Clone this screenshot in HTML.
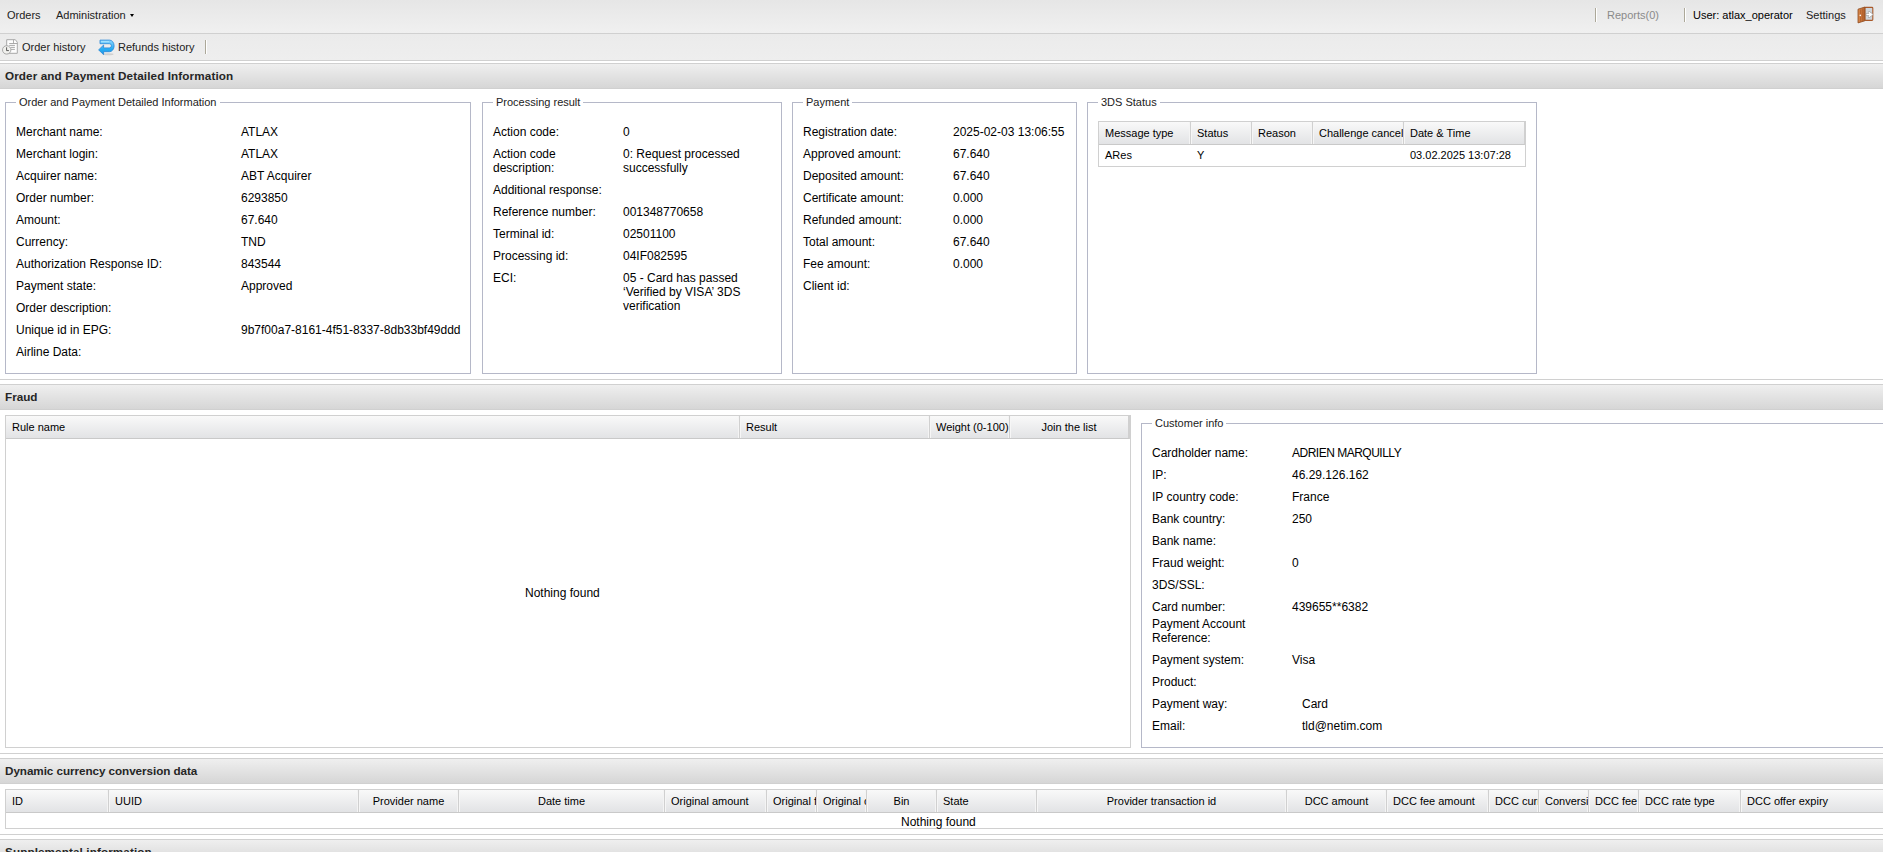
<!DOCTYPE html>
<html><head><meta charset="utf-8">
<style>
*{box-sizing:border-box;margin:0;padding:0}
html,body{width:1883px;height:852px;overflow:hidden;background:#fff}
body{position:relative;font-family:"Liberation Sans",sans-serif;font-size:12px;color:#000}
.a{position:absolute;white-space:nowrap}
.tb1{position:absolute;left:0;top:0;width:1883px;height:34px;background:linear-gradient(#e6e6e6,#f0f0f0);border-bottom:1px solid #d0d0d0}
.tb2{position:absolute;left:0;top:34px;width:1883px;height:27px;background:linear-gradient(#ebebeb,#eeeeee);border-bottom:1px solid #d0d0d0}
.tbt{font-size:11px;color:#222}
.hdr{position:absolute;left:0;width:1883px;height:26px;background:linear-gradient(#efefef,#d6d6d6);border-top:1px solid #d0d0d0;border-bottom:1px solid #d0d0d0;font-weight:bold;font-size:11.7px;color:#262626}
.hdr span{position:absolute;left:5px;top:5px}
.sep{position:absolute;left:0;width:1883px;height:1px;background:#d0d0d0}
.fs{position:absolute;border:1px solid #b5b8c8}
.lg{position:absolute;top:-8px;background:#fff;padding:0 3px;font-size:11px;line-height:14px;color:#222}
.grid{position:absolute;border:1px solid #d0d0d0;background:#fff}
.gh{position:absolute;left:0;top:0;height:23px;background:linear-gradient(#f9f9f9,#e2e3e5);border-bottom:1px solid #c9c9c9}
.gc{position:absolute;top:0;white-space:nowrap;height:22px;border-right:1px solid #d0d0d0;font-size:11px;line-height:22px;padding-left:6px;overflow:hidden;color:#000;box-shadow:1px 0 0 #f6f6f6,inset -1px 0 0 #f4f4f4}
.ctr{text-align:center;padding-left:0}
.r{position:absolute;white-space:nowrap;line-height:14px}
</style></head><body>

<!-- top toolbar -->
<div class="tb1"></div>
<div class="a tbt" style="left:7px;top:9px">Orders</div>
<div class="a tbt" style="left:56px;top:9px">Administration</div>
<div class="a" style="left:130px;top:14px;width:0;height:0;border-left:2.5px solid transparent;border-right:2.5px solid transparent;border-top:3px solid #000"></div>
<div class="a" style="left:1595px;top:8px;width:2px;height:14px;border-left:1px solid #aca899;border-right:1px solid #fff"></div>
<div class="a tbt" style="left:1607px;top:9px;color:#8a8a8a">Reports(0)</div>
<div class="a" style="left:1684px;top:8px;width:2px;height:14px;border-left:1px solid #aca899;border-right:1px solid #fff"></div>
<div class="a tbt" style="left:1693px;top:9px;color:#000">User: atlax_operator</div>
<div class="a tbt" style="left:1806px;top:9px">Settings</div>
<svg class="a" style="left:1856px;top:4px" width="20" height="22" viewBox="0 0 20 22">
 <defs><linearGradient id="dg" x1="0" x2="1" y1="0" y2="0"><stop offset="0" stop-color="#d9894c"/><stop offset="1" stop-color="#b8652c"/></linearGradient></defs>
 <rect x="8.8" y="3.4" width="8" height="13" rx="0.8" fill="#cfd6dc" stroke="#a9592a" stroke-width="1.1"/>
 <path d="M11 10.5 H14.5 M13.2 8.6 L15.8 10.5 L13.2 12.4" stroke="#999" stroke-width="2.6" fill="none" stroke-linecap="round" stroke-linejoin="round"/>
 <path d="M11 10.5 H14.5 M13.2 8.6 L15.8 10.5 L13.2 12.4" stroke="#fff" stroke-width="1.5" fill="none" stroke-linecap="round" stroke-linejoin="round"/>
 <path d="M2 5.2 L8.9 3 L8.9 16.8 L2 18.9 Z" fill="url(#dg)" stroke="#8e4a20" stroke-width="0.8" stroke-linejoin="round"/>
 <path d="M4.6 5.5 V17.6 M6.8 4.8 V17" stroke="#a8582a" stroke-width="0.7"/>
 <circle cx="4.3" cy="11.4" r="0.8" fill="#fff"/>
</svg>

<!-- second toolbar -->
<div class="tb2"></div>
<svg class="a" style="left:0px;top:36px" width="22" height="22" viewBox="0 0 22 22">
 <path d="M6.7 3.7 H15.3 L17.3 6.2 V17.3 H6.7 Z" fill="#fdfdfd" stroke="#a8a8a8" stroke-width="1"/>
 <path d="M13.5 3.7 V7.5" stroke="#a8a8a8" stroke-width="0.9"/>
 <path d="M9.2 7.5 H17.3 M9.2 9.4 H14.9 M10.5 11.4 H14.9 M11 13.4 H14.9" stroke="#a0a0a0" stroke-width="0.9"/>
 <circle cx="6.7" cy="13.9" r="4.2" fill="#f1f1ee" stroke="#a8a8a8" stroke-width="1"/>
 <path d="M6.6 11.3 V14.6 H8.9" stroke="#333" stroke-width="0.8" fill="none"/>
</svg>
<div class="a tbt" style="left:22px;top:41px">Order history</div>
<svg class="a" style="left:95px;top:36px" width="22" height="22" viewBox="0 0 22 22">
 <defs><linearGradient id="ag" x1="0" x2="0" y1="0" y2="1"><stop offset="0" stop-color="#8fd8ff"/><stop offset="0.6" stop-color="#29aef5"/><stop offset="1" stop-color="#1a98e6"/></linearGradient></defs>
 <ellipse cx="13" cy="18.3" rx="5.5" ry="1" fill="#c8c8c8" opacity="0.8"/>
 <path d="M5 4.1 H14.5 A4.6 5.8 0 0 1 14.5 15.7 H8.6 V18.6 L3.6 13.9 L8.6 9 V11.9 H14.3 A2.1 2.1 0 0 0 14.3 7.7 H5 Z" fill="url(#ag)" stroke="#2a86d6" stroke-width="0.8" stroke-linejoin="round"/>
 <path d="M6 5.6 H14" stroke="#aee6ff" stroke-width="1.2" opacity="0.8"/>
</svg>
<div class="a tbt" style="left:118px;top:41px">Refunds history</div>
<div class="a" style="left:205px;top:40px;width:2px;height:14px;border-left:1px solid #aca899;border-right:1px solid #fff"></div>

<!-- header 1 -->
<div class="hdr" style="top:63px"><span style="letter-spacing:0.11px;left:5px">Order and Payment Detailed Information</span></div>

<!-- fieldset 1 -->
<div class="fs" style="left:5px;top:102px;width:466px;height:272px">
 <div class="lg" style="left:10px">Order and Payment Detailed Information</div>
</div>
<div class="r" style="left:16px;top:125px">Merchant name:</div><div class="r" style="left:241px;top:125px">ATLAX</div>
<div class="r" style="left:16px;top:147px">Merchant login:</div><div class="r" style="left:241px;top:147px">ATLAX</div>
<div class="r" style="left:16px;top:169px">Acquirer name:</div><div class="r" style="left:241px;top:169px">ABT Acquirer</div>
<div class="r" style="left:16px;top:191px">Order number:</div><div class="r" style="left:241px;top:191px">6293850</div>
<div class="r" style="left:16px;top:213px">Amount:</div><div class="r" style="left:241px;top:213px">67.640</div>
<div class="r" style="left:16px;top:235px">Currency:</div><div class="r" style="left:241px;top:235px">TND</div>
<div class="r" style="left:16px;top:257px">Authorization Response ID:</div><div class="r" style="left:241px;top:257px">843544</div>
<div class="r" style="left:16px;top:279px">Payment state:</div><div class="r" style="left:241px;top:279px">Approved</div>
<div class="r" style="left:16px;top:301px">Order description:</div>
<div class="r" style="left:16px;top:323px">Unique id in EPG:</div><div class="r" style="left:241px;top:323px">9b7f00a7-8161-4f51-8337-8db33bf49ddd</div>
<div class="r" style="left:16px;top:345px">Airline Data:</div>

<!-- fieldset 2 -->
<div class="fs" style="left:482px;top:102px;width:300px;height:272px">
 <div class="lg" style="left:10px">Processing result</div>
</div>
<div class="r" style="left:493px;top:125px">Action code:</div><div class="r" style="left:623px;top:125px">0</div>
<div class="r" style="left:493px;top:147px">Action code<br>description:</div><div class="r" style="left:623px;top:147px">0: Request processed<br>successfully</div>
<div class="r" style="left:493px;top:183px">Additional response:</div>
<div class="r" style="left:493px;top:205px">Reference number:</div><div class="r" style="left:623px;top:205px">001348770658</div>
<div class="r" style="left:493px;top:227px">Terminal id:</div><div class="r" style="left:623px;top:227px">02501100</div>
<div class="r" style="left:493px;top:249px">Processing id:</div><div class="r" style="left:623px;top:249px">04IF082595</div>
<div class="r" style="left:493px;top:271px">ECI:</div><div class="r" style="left:623px;top:271px">05 - Card has passed<br>&lsquo;Verified by VISA&rsquo; 3DS<br>verification</div>

<!-- fieldset 3 -->
<div class="fs" style="left:792px;top:102px;width:285px;height:272px">
 <div class="lg" style="left:10px">Payment</div>
</div>
<div class="r" style="left:803px;top:125px">Registration date:</div><div class="r" style="left:953px;top:125px">2025-02-03 13:06:55</div>
<div class="r" style="left:803px;top:147px">Approved amount:</div><div class="r" style="left:953px;top:147px">67.640</div>
<div class="r" style="left:803px;top:169px">Deposited amount:</div><div class="r" style="left:953px;top:169px">67.640</div>
<div class="r" style="left:803px;top:191px">Certificate amount:</div><div class="r" style="left:953px;top:191px">0.000</div>
<div class="r" style="left:803px;top:213px">Refunded amount:</div><div class="r" style="left:953px;top:213px">0.000</div>
<div class="r" style="left:803px;top:235px">Total amount:</div><div class="r" style="left:953px;top:235px">67.640</div>
<div class="r" style="left:803px;top:257px">Fee amount:</div><div class="r" style="left:953px;top:257px">0.000</div>
<div class="r" style="left:803px;top:279px">Client id:</div>

<!-- fieldset 4 -->
<div class="fs" style="left:1087px;top:102px;width:450px;height:272px">
 <div class="lg" style="left:10px">3DS Status</div>
</div>
<div class="grid" style="left:1098px;top:121px;width:428px;height:46px">
 <div class="gh" style="width:426px;border-right:1px solid #d0d0d0">
  <div class="gc" style="left:0;width:92px">Message type</div>
  <div class="gc" style="left:92px;width:61px">Status</div>
  <div class="gc" style="left:153px;width:61px">Reason</div>
  <div class="gc" style="left:214px;width:91px">Challenge cancel</div>
  <div class="gc" style="left:305px;width:120px;border-right:none;box-shadow:none">Date &amp; Time</div>
 </div>
 <div class="a" style="left:6px;top:23px;line-height:21px;font-size:11px">ARes</div>
 <div class="a" style="left:98px;top:23px;line-height:21px;font-size:11px">Y</div>
 <div class="a" style="left:311px;top:23px;line-height:21px;font-size:11px">03.02.2025 13:07:28</div>
</div>

<div class="sep" style="top:379px"></div>

<!-- header fraud -->
<div class="hdr" style="top:384px"><span>Fraud</span></div>


<!-- fraud grid -->
<div class="grid" style="left:5px;top:415px;width:1126px;height:333px">
 <div class="gh" style="width:1124px;border-right:2px solid #d0d0d0">
  <div class="gc" style="left:0;width:734px">Rule name</div>
  <div class="gc" style="left:734px;width:190px">Result</div>
  <div class="gc" style="left:924px;width:80px">Weight (0-100)</div>
  <div class="gc ctr" style="left:1004px;width:118px;border-right:none;box-shadow:none">Join the list</div>
 </div>
 <div class="a" style="left:519px;top:170px;line-height:14px">Nothing found</div>
</div>

<!-- customer info -->
<div class="fs" style="left:1141px;top:423px;width:760px;height:325px">
 <div class="lg" style="left:10px">Customer info</div>
</div>
<div class="r" style="left:1152px;top:446px">Cardholder name:</div><div class="r" style="left:1292px;top:446px;letter-spacing:-0.5px">ADRIEN MARQUILLY</div>
<div class="r" style="left:1152px;top:468px">IP:</div><div class="r" style="left:1292px;top:468px">46.29.126.162</div>
<div class="r" style="left:1152px;top:490px">IP country code:</div><div class="r" style="left:1292px;top:490px">France</div>
<div class="r" style="left:1152px;top:512px">Bank country:</div><div class="r" style="left:1292px;top:512px">250</div>
<div class="r" style="left:1152px;top:534px">Bank name:</div>
<div class="r" style="left:1152px;top:556px">Fraud weight:</div><div class="r" style="left:1292px;top:556px">0</div>
<div class="r" style="left:1152px;top:578px">3DS/SSL:</div>
<div class="r" style="left:1152px;top:600px">Card number:</div><div class="r" style="left:1292px;top:600px">439655**6382</div>
<div class="r" style="left:1152px;top:617px">Payment Account<br>Reference:</div>
<div class="r" style="left:1152px;top:653px">Payment system:</div><div class="r" style="left:1292px;top:653px">Visa</div>
<div class="r" style="left:1152px;top:675px">Product:</div>
<div class="r" style="left:1152px;top:697px">Payment way:</div><div class="r" style="left:1302px;top:697px">Card</div>
<div class="r" style="left:1152px;top:719px">Email:</div><div class="r" style="left:1302px;top:719px">tld@netim.com</div>

<div class="sep" style="top:753px"></div>

<!-- header dcc -->
<div class="hdr" style="top:758px"><span style="letter-spacing:-0.06px">Dynamic currency conversion data</span></div>

<!-- dcc grid -->
<div class="grid" style="left:5px;top:789px;width:1890px;height:40px">
 <div class="gh" style="width:1890px">
  <div class="gc " style="left:0px;width:103px">ID</div>
  <div class="gc " style="left:103px;width:250px">UUID</div>
  <div class="gc ctr" style="left:353px;width:100px">Provider name</div>
  <div class="gc ctr" style="left:453px;width:206px">Date time</div>
  <div class="gc " style="left:659px;width:102px">Original amount</div>
  <div class="gc " style="left:761px;width:50px">Original fee</div>
  <div class="gc " style="left:811px;width:50px">Original currency</div>
  <div class="gc ctr" style="left:861px;width:70px">Bin</div>
  <div class="gc " style="left:931px;width:100px">State</div>
  <div class="gc ctr" style="left:1031px;width:250px">Provider transaction id</div>
  <div class="gc ctr" style="left:1281px;width:100px">DCC amount</div>
  <div class="gc " style="left:1381px;width:102px">DCC fee amount</div>
  <div class="gc " style="left:1483px;width:50px">DCC currency</div>
  <div class="gc " style="left:1533px;width:50px">Conversion rate</div>
  <div class="gc " style="left:1583px;width:50px">DCC fee</div>
  <div class="gc " style="left:1633px;width:102px">DCC rate type</div>
  <div class="gc " style="left:1735px;width:155px">DCC offer expiry</div>
 </div>
 <div class="a" style="left:895px;top:25px;line-height:15px">Nothing found</div>
</div>

<div class="sep" style="top:834px"></div>

<!-- header supplemental -->
<div class="hdr" style="top:839px"><span style="letter-spacing:0.11px">Supplemental information</span></div>

</body></html>
